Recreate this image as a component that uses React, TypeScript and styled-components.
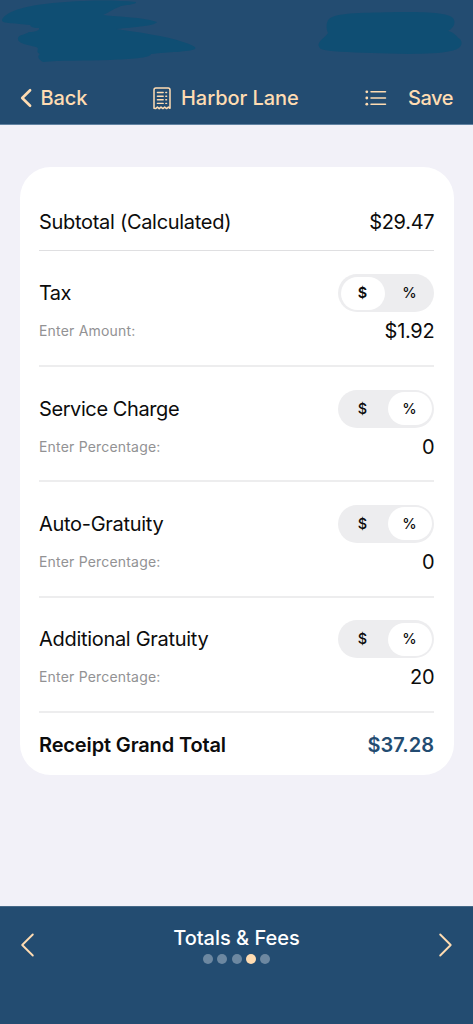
import React from 'react';
import styled, { createGlobalStyle } from 'styled-components';

const GlobalStyle = createGlobalStyle`
  *, *::before, *::after { box-sizing: border-box; }
  html, body { margin: 0; padding: 0; background: #f2f1f8; }
  body { font-family: Inter, 'Liberation Sans', sans-serif; color: #0c0c0c; }
  button { font: inherit; color: inherit; background: none; border: 0; padding: 0; margin: 0; }
`;

const navy = '#234c71';
const peach = '#ffdcb2';

const Screen = styled.div`
  width: 473px;
  height: 1024px;
  display: flex;
  flex-direction: column;
  background: #f2f1f8;
  overflow: hidden;
`;

const Header = styled.header`
  height: 125px;
  flex: none;
  display: flex;
  flex-direction: column;
  background: ${navy};
  border-bottom: 1px solid #6283a2;
`;

const StatusArea = styled.svg`
  display: block;
  width: 473px;
  height: 72px;
  flex: none;
`;

const NavBar = styled.nav`
  height: 53px;
  padding: 0 19.5px;
  display: grid;
  grid-template-columns: 133.5px auto 1fr;
  align-items: center;
  color: ${peach};
`;

const NavGroup = styled.div<{ $gap: number; $end?: boolean }>`
  display: flex;
  align-items: center;
  justify-content: ${(p) => (p.$end ? 'flex-end' : 'flex-start')};
  gap: ${(p) => p.$gap}px;
`;

const NavLabel = styled.span<{ $spacing: number }>`
  font-size: 20px;
  line-height: 26px;
  font-weight: 500;
  letter-spacing: ${(p) => p.$spacing}px;
  margin-right: ${(p) => -p.$spacing}px;
  white-space: nowrap;
`;

const Main = styled.main`
  flex: 1;
  padding: 42px 19.5px 0;
`;

const Card = styled.section`
  height: 607.5px;
  padding: 0 19.5px;
  border-radius: 31px;
  background: #fff;
`;

const SummaryRow = styled.div`
  height: 84.4px;
  padding-top: 27px;
  display: flex;
  align-items: center;
  justify-content: space-between;
  border-bottom: 1px solid #dfdfe1;
`;

const TotalRow = styled.div`
  height: 61px;
  padding-top: 3px;
  display: flex;
  align-items: center;
  justify-content: space-between;
`;

const Fee = styled.div`
  height: 115.4px;
  padding-top: 22.8px;
  border-bottom: 2px solid #ededee;
`;

const FeeLine = styled.div`
  height: 38px;
  display: flex;
  align-items: center;
  justify-content: space-between;
`;

const Label = styled.span<{ $spacing?: number; $bold?: boolean }>`
  font-size: 20px;
  line-height: 28px;
  font-weight: ${(p) => (p.$bold ? 600 : 400)};
  letter-spacing: ${(p) => p.$spacing ?? 0}px;
  white-space: nowrap;
`;

const Hint = styled.span`
  font-size: 14px;
  line-height: 18px;
  letter-spacing: 0.19px;
  color: #929294;
`;

const Value = styled.span<{ $accent?: boolean }>`
  font-size: 20px;
  line-height: 28px;
  letter-spacing: ${(p) => (p.$accent ? 0 : -0.3)}px;
  margin-right: ${(p) => (p.$accent ? 0 : -0.3)}px;
  font-weight: ${(p) => (p.$accent ? 600 : 400)};
  color: ${(p) => (p.$accent ? navy : 'inherit')};
`;

const Toggle = styled.div`
  width: 96px;
  height: 38px;
  padding: 2.5px;
  display: grid;
  grid-template-columns: 44px 44px;
  justify-content: space-between;
  border-radius: 19px;
  background: #ededef;
`;

const Segment = styled.button<{ $active: boolean; $strong?: boolean }>`
  border-radius: 17px;
  font-size: 14.5px;
  line-height: 18px;
  font-weight: ${(p) => (p.$strong ? 600 : 500)};
  background: ${(p) => (p.$active ? '#fff' : 'transparent')};
`;

const Footer = styled.footer`
  height: 118.5px;
  flex: none;
  padding: 18px 20px 0;
  display: flex;
  justify-content: space-between;
  align-items: flex-start;
  background: ${navy};
  border-top: 1px solid #456887;
`;

const PageInfo = styled.div`
  display: flex;
  flex-direction: column;
  align-items: center;
  gap: 3px;
  color: #fff;
`;

const Dots = styled.div`
  display: flex;
  gap: 4.4px;
`;

const Dot = styled.span<{ $active: boolean }>`
  width: 10px;
  height: 10px;
  border-radius: 50%;
  background: ${(p) => (p.$active ? peach : '#6d88a1')};
`;

const PagerButton = styled.button`
  display: flex;
  margin-top: 8px;
`;

const ReceiptIcon = () => (
  <svg width="18" height="23" viewBox="0 0 18 23" fill="none" stroke="currentColor">
    <path d="M1 21.3V2.9Q1 1 2.9 1H15.1Q17 1 17 2.9V21.3L15.4 20.1L13.6 21.6L11.7 20.1L9.9 21.6L8 20.1L6.2 21.6L4.4 20.1L2.6 21.6Z" strokeWidth="1.5" strokeLinejoin="round" />
    <path d="M4.4 5.5H10.2M4.4 9.2H10.2M4.4 12.8H10.2M4.4 16.4H10.2M12.8 5.5H13.6M12.8 9.2H13.6M12.8 12.8H13.6M12.8 16.4H13.6" strokeWidth="1.4" strokeLinecap="round" />
  </svg>
);

const ListIcon = () => (
  <svg width="22" height="16" viewBox="0 0 22 16" fill="none" stroke="currentColor">
    <path d="M6 1.8H20.5M6 8H20.5M6 14.2H20.5" strokeWidth="1.5" strokeLinecap="round" />
    <g fill="currentColor" stroke="none">
      <circle cx="1.8" cy="1.8" r="1.4" />
      <circle cx="1.8" cy="8" r="1.4" />
      <circle cx="1.8" cy="14.2" r="1.4" />
    </g>
  </svg>
);

const BackIcon = () => (
  <svg width="13" height="20" viewBox="0 0 13 20" fill="none" stroke="currentColor" strokeWidth="2.6" strokeLinecap="round" strokeLinejoin="round">
    <path d="M10.1 2.2L2.2 10L10.1 17.8" />
  </svg>
);

const Chevron = ({ right = false }: { right?: boolean }) => (
  <svg width="15" height="24" viewBox="0 0 15 24" fill="none" stroke={peach} strokeWidth="1.9" strokeLinecap="round" strokeLinejoin="round">
    <path d={right ? 'M2.2 1.5L12.7 12L2.2 22.5' : 'M12.8 1.5L2.2 12L12.8 22.5'} />
  </svg>
);

type FeeItem = { name: string; mode: '$' | '%'; value: string; spacing: number };

const fees: FeeItem[] = [
  { name: 'Tax', mode: '$', value: '$1.92', spacing: -0.6 },
  { name: 'Service Charge', mode: '%', value: '0', spacing: -0.41 },
  { name: 'Auto-Gratuity', mode: '%', value: '0', spacing: -0.3 },
  { name: 'Additional Gratuity', mode: '%', value: '20', spacing: -0.3 },
];

const FeeEditor = ({ name, mode, value, spacing }: FeeItem) => (
  <Fee>
    <FeeLine>
      <Label $spacing={spacing}>{name}</Label>
      <Toggle>
        <Segment $active={mode === '$'} $strong={mode === '$'}>$</Segment>
        <Segment $active={mode === '%'}>%</Segment>
      </Toggle>
    </FeeLine>
    <FeeLine>
      <Hint>{mode === '$' ? 'Enter Amount:' : 'Enter Percentage:'}</Hint>
      <Value>{value}</Value>
    </FeeLine>
  </Fee>
);

export default function App() {
  return (
    <>
      <GlobalStyle />
      <Screen>
        <Header>
          <StatusArea viewBox="0 0 473 72" fill="#0f4e73">
            <path d="M2 20C5 11 29 4 66 2C91 0 117 0 136 2C137 5 121 5 119 7C113 9 108 13 103 15C120 17 141 17 157 22C155 26 135 27 116 29C137 32 166 36 183 42C192 45 197 47 195 49C189 52 168 52 151 54C151 58 129 59 110 60C86 61 59 60 43 62C38 59 37 56 40 54C34 51 41 49 36 47C24 44 17 43 18 38C18 35 27 34 29 32C36 32 40 30 39 28C31 28 31 26 30 25C17 23 1 24 2 20Z" />
            <path d="M329 19C337 12 367 13 397 12C421 12 447 12 453 18C457 24 452 29 448 31C456 33 456 37 460 39C465 46 457 50 451 51C432 55 397 54 372 53C348 52 329 52 321 49C314 43 324 39 328 33C326 29 326 22 329 19Z" />
          </StatusArea>
          <NavBar>
            <NavGroup $gap={8}>
              <BackIcon />
              <NavLabel $spacing={-0.1}>Back</NavLabel>
            </NavGroup>
            <NavGroup $gap={10}>
              <ReceiptIcon />
              <NavLabel $spacing={-0.05}>Harbor Lane</NavLabel>
            </NavGroup>
            <NavGroup $gap={21} $end>
              <ListIcon />
              <NavLabel $spacing={-0.4}>Save</NavLabel>
            </NavGroup>
          </NavBar>
        </Header>
        <Main>
          <Card>
            <SummaryRow>
              <Label $spacing={-0.3}>Subtotal (Calculated)</Label>
              <Value>$29.47</Value>
            </SummaryRow>
            {fees.map((fee) => (
              <FeeEditor key={fee.name} {...fee} />
            ))}
            <TotalRow>
              <Label $bold $spacing={-0.14}>Receipt Grand Total</Label>
              <Value $accent>$37.28</Value>
            </TotalRow>
          </Card>
        </Main>
        <Footer>
          <PagerButton aria-label="Previous page"><Chevron /></PagerButton>
          <PageInfo>
            <NavLabel $spacing={0}>Totals &amp; Fees</NavLabel>
            <Dots>
              {[0, 1, 2, 3, 4].map((i) => (
                <Dot key={i} $active={i === 3} />
              ))}
            </Dots>
          </PageInfo>
          <PagerButton aria-label="Next page"><Chevron right /></PagerButton>
        </Footer>
      </Screen>
    </>
  );
}
